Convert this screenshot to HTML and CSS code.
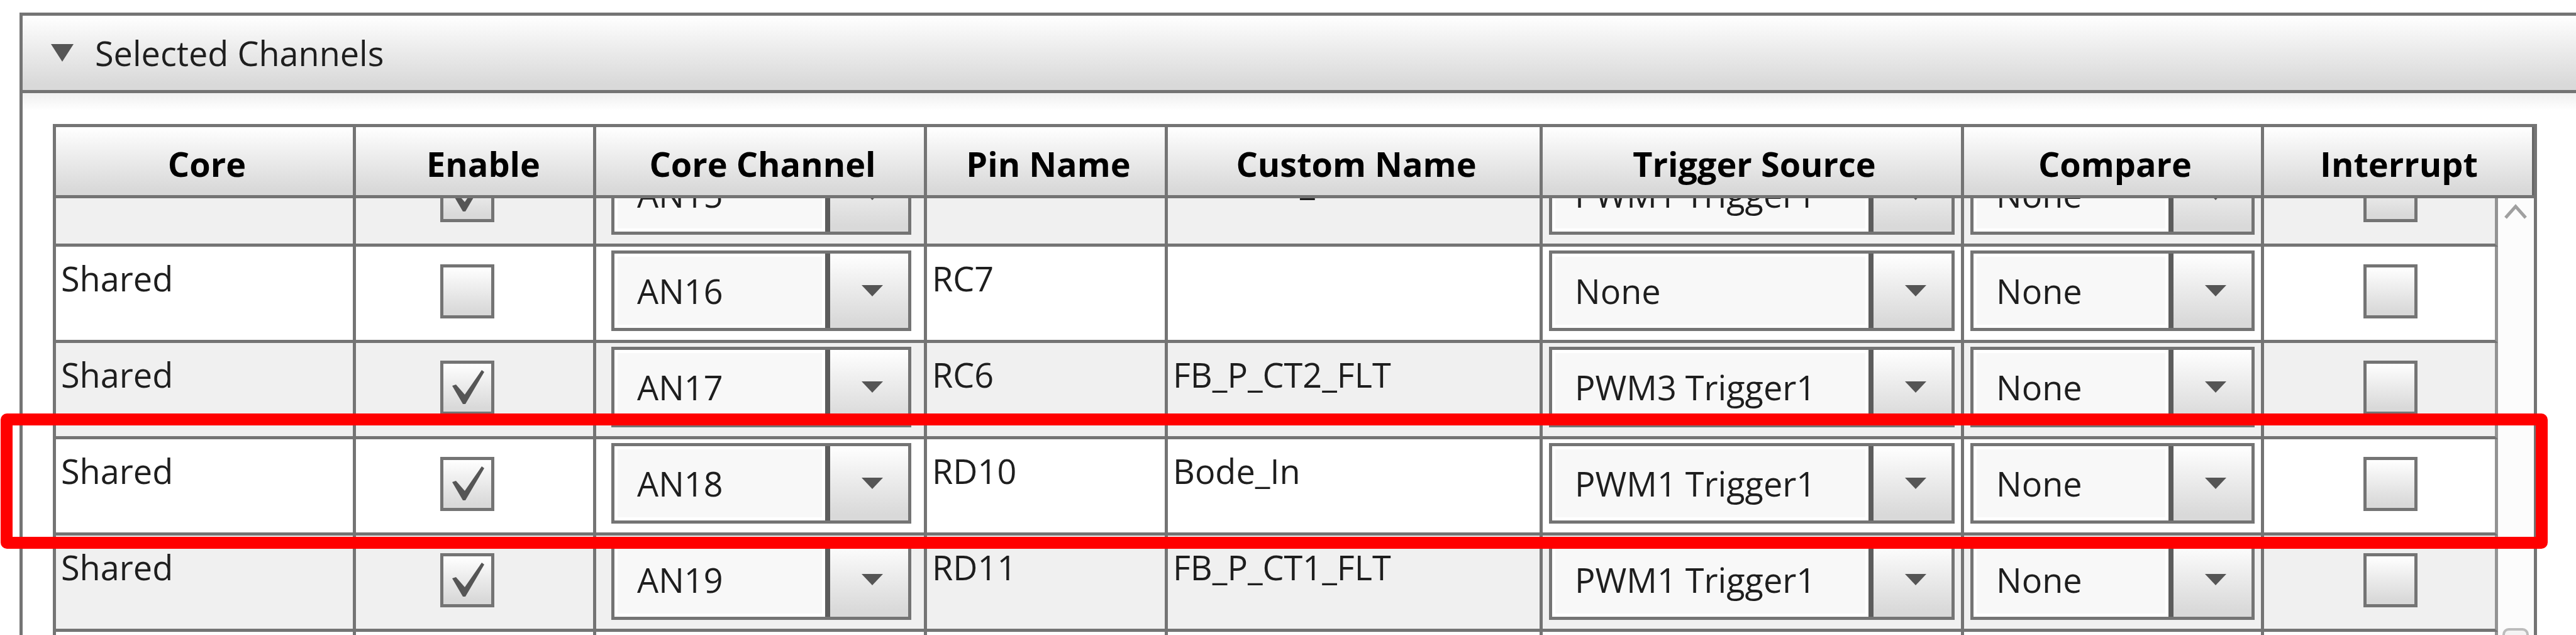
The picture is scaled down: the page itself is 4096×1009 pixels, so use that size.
FILE: index.html
```html
<!DOCTYPE html>
<html lang="en">
<head>
<meta charset="utf-8">
<title>Selected Channels</title>
<link rel="stylesheet" href="styles.css">
</head>
<body>
<section class="panel">
  <button class="panel-title" type="button" aria-expanded="true">
    <svg class="disclosure" viewBox="0 0 36 28" aria-hidden="true"><polygon points="0,0 36,0 18,28"/></svg>
    <span>Selected Channels</span>
  </button>
  <div class="panel-body">
    <table class="channels">
      <colgroup>
        <col class="col-core"><col class="col-enable"><col class="col-channel"><col class="col-pin"><col class="col-custom"><col class="col-trigger"><col class="col-compare"><col class="col-interrupt"><col class="col-scroll">
      </colgroup>
      <thead>
        <tr>
          <th>Core</th><th class="th-enable">Enable</th><th>Core Channel</th><th>Pin Name</th><th>Custom Name</th><th>Trigger Source</th><th>Compare</th><th class="th-last" colspan="2">Interrupt</th>
        </tr>
      </thead>
      <tbody>
        <tr class="partial shaded">
          <td></td>
          <td><div class="clip"><div class="cell check"><input type="checkbox" aria-label="Enable AN15" checked></div></div></td>
          <td><div class="clip"><div class="cell pick inset"><select aria-label="Core channel AN15"><option>AN15</option></select></div></div></td>
          <td></td>
          <td><div class="clip"><div class="cell text tail">_</div></div></td>
          <td><div class="clip"><div class="cell pick"><select aria-label="Trigger source AN15"><option>PWM1 Trigger1</option></select></div></div></td>
          <td><div class="clip"><div class="cell pick"><select aria-label="Compare AN15"><option>None</option></select></div></div></td>
          <td class="edge"><div class="clip"><div class="cell check irq"><input type="checkbox" aria-label="Interrupt AN15"></div></div></td>
          <td class="scroll" rowspan="6">
            <svg class="chevron" viewBox="0 0 36 24" aria-hidden="true"><path d="M2 22 18 4 34 22"/></svg>
            <div class="thumb"></div>
          </td>
        </tr>
        <tr>
          <td><div class="cell text">Shared</div></td>
          <td><div class="cell check"><input type="checkbox" aria-label="Enable AN16"></div></td>
          <td><div class="cell pick inset"><select aria-label="Core channel AN16"><option>AN16</option></select></div></td>
          <td><div class="cell text">RC7</div></td>
          <td></td>
          <td><div class="cell pick"><select aria-label="Trigger source AN16"><option>None</option></select></div></td>
          <td><div class="cell pick"><select aria-label="Compare AN16"><option>None</option></select></div></td>
          <td class="edge"><div class="cell check irq"><input type="checkbox" aria-label="Interrupt AN16"></div></td>
        </tr>
        <tr class="shaded">
          <td><div class="cell text">Shared</div></td>
          <td><div class="cell check"><input type="checkbox" aria-label="Enable AN17" checked></div></td>
          <td><div class="cell pick inset"><select aria-label="Core channel AN17"><option>AN17</option></select></div></td>
          <td><div class="cell text">RC6</div></td>
          <td><div class="cell text">FB_P_CT2_FLT</div></td>
          <td><div class="cell pick"><select aria-label="Trigger source AN17"><option>PWM3 Trigger1</option></select></div></td>
          <td><div class="cell pick"><select aria-label="Compare AN17"><option>None</option></select></div></td>
          <td class="edge"><div class="cell check irq"><input type="checkbox" aria-label="Interrupt AN17"></div></td>
        </tr>
        <tr>
          <td><div class="cell text">Shared</div></td>
          <td><div class="cell check"><input type="checkbox" aria-label="Enable AN18" checked></div></td>
          <td><div class="cell pick inset"><select aria-label="Core channel AN18"><option>AN18</option></select></div></td>
          <td><div class="cell text">RD10</div></td>
          <td><div class="cell text">Bode_In</div></td>
          <td><div class="cell pick"><select aria-label="Trigger source AN18"><option>PWM1 Trigger1</option></select></div></td>
          <td><div class="cell pick"><select aria-label="Compare AN18"><option>None</option></select></div></td>
          <td class="edge"><div class="cell check irq"><input type="checkbox" aria-label="Interrupt AN18"></div></td>
        </tr>
        <tr class="shaded">
          <td><div class="cell text">Shared</div></td>
          <td><div class="cell check"><input type="checkbox" aria-label="Enable AN19" checked></div></td>
          <td><div class="cell pick inset"><select aria-label="Core channel AN19"><option>AN19</option></select></div></td>
          <td><div class="cell text">RD11</div></td>
          <td><div class="cell text">FB_P_CT1_FLT</div></td>
          <td><div class="cell pick"><select aria-label="Trigger source AN19"><option>PWM1 Trigger1</option></select></div></td>
          <td><div class="cell pick"><select aria-label="Compare AN19"><option>None</option></select></div></td>
          <td class="edge"><div class="cell check irq"><input type="checkbox" aria-label="Interrupt AN19"></div></td>
        </tr>
        <tr class="next">
          <td></td><td></td><td></td><td></td><td></td><td></td><td></td><td class="edge"></td>
        </tr>
      </tbody>
    </table>
  </div>
</section>
<div class="highlight" aria-hidden="true"></div>
</body>
</html>
```
FILE: styles.css
```css
:root {
  --line: #747474;
  --shade: linear-gradient(#ffffff, #f0f0f0 35%, #d9d9d9 92%);
}

* { box-sizing: border-box; }

body {
  margin: 0;
  height: 100vh;
  overflow: hidden;
  position: relative;
  background: #fff;
  color: #1e1e1e;
  font: 54px/64px "Open Sans", "Noto Sans", sans-serif;
}

.panel {
  margin: 20px 0 0 31px;
  border-top: 5px solid var(--line);
  border-left: 5px solid var(--line);
}

.panel-title {
  display: flex;
  align-items: center;
  gap: 34px;
  width: 100%;
  height: 123px;
  padding: 0 45px;
  border: 0;
  border-bottom: 5px solid var(--line);
  background: var(--shade);
  color: inherit;
  font: inherit;
  text-align: left;
}

.disclosure {
  width: 36px;
  height: 28px;
  fill: #555;
}

.panel-body {
  padding: 49px 62px 0 48px;
  background: linear-gradient(#f0f0f0, #fff 28px);
}

.channels {
  width: 100%;
  table-layout: fixed;
  border-collapse: separate;
  border-spacing: 0;
  border-top: 5px solid var(--line);
  border-left: 5px solid var(--line);
  background: #fff;
}

.col-core { width: 477px; }
.col-enable { width: 382px; }
.col-channel { width: 526px; }
.col-pin { width: 383px; }
.col-trigger { width: 670px; }
.col-compare { width: 477px; }
.col-interrupt { width: 372px; }
.col-scroll { width: 62px; }

th, td {
  padding: 0;
  border-right: 5px solid var(--line);
  border-bottom: 5px solid var(--line);
}

th {
  height: 113px;
  padding: 8px 0 0 8px;
  background: var(--shade);
  color: #000;
  font-weight: 700;
  text-align: center;
}

.th-enable { padding-left: 28px; }
.th-last { box-shadow: inset -3px 0 #666; padding-left: 0; }

td {
  height: 153px;
  vertical-align: top;
  white-space: nowrap;
}

.shaded td { background: #f0f0f0; }
.partial td { height: 77px; }
.next td { height: 5px; border-bottom: 0; }
td.edge { border-right-color: #939393; }

.clip {
  display: flex;
  flex-direction: column;
  justify-content: flex-end;
  height: 72px;
  overflow: hidden;
}

.cell {
  display: flex;
  align-items: flex-start;
  flex: none;
  height: 148px;
}

.text { padding: 18px 8px 0; }
.tail { padding-left: 210px; }
.check { padding: 28px 0 0 134px; }
.irq { padding-left: 158px; }
.pick { padding: 6px 10px 0; }
.inset { padding: 6px 20px 0 24px; }

input[type="checkbox"] {
  appearance: none;
  width: 86px;
  height: 86px;
  margin: 0;
  border: 5px solid var(--line);
  background: var(--shade);
}

input[type="checkbox"]:checked {
  background:
    url("data:image/svg+xml,%3Csvg xmlns='http://www.w3.org/2000/svg' viewBox='0 0 76 76'%3E%3Cpath fill='%23555' d='M14 35 20 33 34 49 61 10 65 13 35 64 31 64Z'/%3E%3C/svg%3E") center / 100% 100% no-repeat,
    var(--shade);
}

select {
  appearance: none;
  width: 100%;
  height: 128px;
  margin: 0;
  padding: 0 132px 0 36px;
  border: 5px solid var(--line);
  border-radius: 0;
  background:
    url("data:image/svg+xml,%3Csvg xmlns='http://www.w3.org/2000/svg' viewBox='0 0 34 18'%3E%3Cpath fill='%23555' d='M0 0H34L17 18Z'/%3E%3C/svg%3E") right 40px center / 34px 18px no-repeat,
    linear-gradient(#5c5c5c, #5c5c5c) right 124px top / 8px 100% no-repeat,
    linear-gradient(#ffffff, #f0f0f0 35%, #d9d9d9 92%) right top / 124px 100% no-repeat,
    linear-gradient(#f8f8f8, #f8f8f8) left 5px top 5px / calc(100% - 142px) calc(100% - 10px) no-repeat,
    #fff;
  color: inherit;
  font: inherit;
  line-height: 80px;
}

.partial .scroll {
  height: auto;
  padding: 9px 8px 0 7px;
  border-bottom: 0;
  background: #fcfcfc;
}

.chevron {
  display: block;
  width: 36px;
  height: 24px;
  margin: 0 auto;
  fill: none;
  stroke: #a0a0a0;
  stroke-width: 5;
}

.thumb {
  height: 11px;
  margin-top: 650px;
  border: 4px solid #bcbcbc;
  border-bottom: 0;
  border-radius: 10px 10px 0 0;
  background: #f4f4f4;
}

/* Callout drawn over the AN18 row */
.highlight {
  position: absolute;
  top: 657px;
  left: 1px;
  right: 45px;
  height: 215px;
  border: 19px solid #f00;
  border-radius: 10px;
  pointer-events: none;
}
```
